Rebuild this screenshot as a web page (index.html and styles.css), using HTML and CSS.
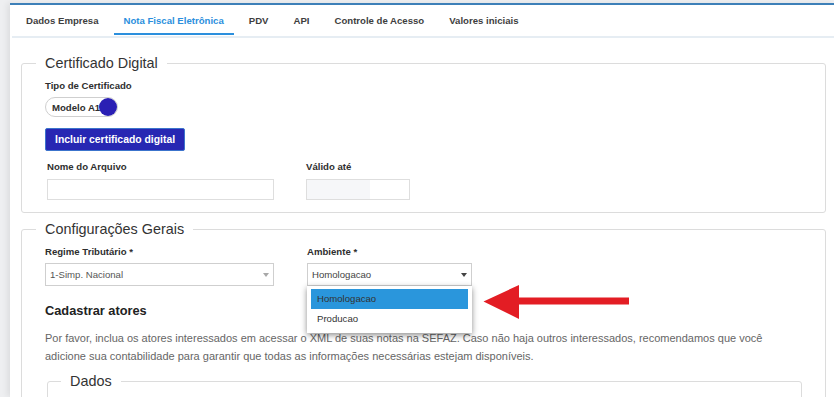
FILE: index.html
```html
<!DOCTYPE html>
<html>
  <head>
    <meta charset="UTF-8" />
    <meta name="viewport" content="width=device-width, initial-scale=1">
    <title>Configurações - Nota Fiscal Eletrônica</title>
    <link rel="stylesheet" href="styles.css">
  </head>
  <body>
    <div class="page">
      <nav class="tabs">
        <a class="tab">Dados Empresa</a>
        <a class="tab active">Nota Fiscal Eletrônica</a>
        <a class="tab">PDV</a>
        <a class="tab">API</a>
        <a class="tab">Controle de Acesso</a>
        <a class="tab">Valores iniciais</a>
      </nav>

      <div class="content">
        <fieldset class="group">
          <legend>Certificado Digital</legend>
          <div class="label first">Tipo de Certificado</div>
          <div class="toggle">
            <span class="toggle-text">Modelo A1</span>
            <span class="toggle-knob"></span>
          </div>
          <button class="primary-button">Incluir certificado digital</button>
          <div class="field-row file-row">
            <div class="field">
              <div class="label">Nome do Arquivo</div>
              <div class="input"></div>
            </div>
            <div class="field">
              <div class="label">Válido até</div>
              <div class="input date"></div>
            </div>
          </div>
        </fieldset>

        <fieldset class="group second">
          <legend>Configurações Gerais</legend>
          <div class="field-row select-row">
            <div class="field">
              <div class="label first">Regime Tributário *</div>
              <div class="select muted">1-Simp. Nacional<span class="caret"></span></div>
            </div>
            <div class="field">
              <div class="label first">Ambiente *</div>
              <div class="select">Homologacao<span class="caret"></span>
                <ul class="dropdown">
                  <li class="option selected">Homologacao</li>
                  <li class="option">Producao</li>
                </ul>
              </div>
            </div>
          </div>

          <h3 class="section-title">Cadastrar atores</h3>
          <p class="hint">Por favor, inclua os atores interessados em acessar o XML de suas notas na SEFAZ. Caso não haja outros interessados, recomendamos que você adicione sua contabilidade para garantir que todas as informações necessárias estejam disponíveis.</p>

          <fieldset class="group inner">
            <legend>Dados</legend>
          </fieldset>
        </fieldset>
      </div>
    </div>

    <svg class="callout-arrow" width="147" height="36" viewBox="0 0 147 36">
      <polygon points="0.5,17.5 36,1 36,13.5 146,13.5 146,20.5 36,20.5 36,35" fill="#e31d24" />
    </svg>
  </body>
</html>
```

FILE: styles.css
```css
* {
  box-sizing: border-box;
}

body {
  margin: 0;
  background: #eeeff1;
  font-family: 'Liberation Sans', Arial, sans-serif;
  color: #333;
  position: relative;
  height: 397px;
  overflow: hidden;
}

.page {
  margin: 3px 0 0 10px;
  background: #fff;
  border-top: 2px solid #3d80b8;
  box-shadow: -3px 0 6px rgba(0, 0, 0, 0.07);
  height: 394px;
  overflow: hidden;
}

.tabs {
  display: flex;
  gap: 5px;
  padding: 0 0 1px 4px;
  margin: 0 0 0 2px;
  border-bottom: 2px solid #e6edf3;
}

.tab {
  padding: 10px 10px 6px;
  font-size: 9.6px;
  line-height: 12px;
  font-weight: bold;
  color: #3e3e3e;
  border-bottom: 2px solid transparent;
  white-space: nowrap;
}

.tab.active {
  color: #2b8fdd;
  border-bottom-color: #2b8fdd;
}

.content {
  padding: 16.5px 8px 0 11px;
}

.group {
  margin: 0;
  padding: 0 23px 12px;
  border: 1px solid #dcdcdc;
  border-radius: 3px;
  min-width: 0;
}

.group legend {
  padding: 0 9px;
  margin-left: -9px;
  font-size: 14.4px;
  line-height: 17px;
  color: #333;
}

.group.second {
  margin-top: 7.5px;
  padding-bottom: 0;
}

.label {
  font-size: 9.6px;
  line-height: 12px;
  font-weight: bold;
  color: #2e2e2e;
}

.label.first {
  margin-top: 8px;
}

.toggle {
  display: inline-flex;
  align-items: center;
  height: 20px;
  margin-top: 5.5px;
  padding-left: 6px;
  border: 1px solid #cfcfcf;
  border-radius: 10px;
  vertical-align: top;
}

.toggle-text {
  font-size: 9.6px;
  font-weight: bold;
  color: #2e2e2e;
}

.toggle-knob {
  width: 18px;
  height: 18px;
  margin-left: -1px;
  border-radius: 50%;
  background: #2a1fb4;
}

.primary-button {
  display: block;
  height: 23px;
  margin-top: 11px;
  padding: 0 9px;
  background: #2727b3;
  border: 1px solid #3c74cc;
  border-radius: 2px;
  color: #fff;
  font-family: inherit;
  font-size: 10.4px;
  font-weight: bold;
}

.field-row {
  display: grid;
}

.file-row {
  grid-template-columns: 227px 104px;
  column-gap: 32px;
  margin: 10px 0 0 2px;
}

.file-row .label {
  margin-bottom: 6px;
}

.input {
  height: 21px;
  border: 1px solid #dedede;
  background: #fff;
}

.input.date {
  background: linear-gradient(to right, #f6f7f9 62%, #fff 62%);
}

.select-row {
  grid-template-columns: 229px 165px;
  column-gap: 33px;
}

.select-row .label {
  margin-bottom: 5.5px;
}

.select {
  position: relative;
  height: 23px;
  padding-left: 4px;
  border: 1px solid #cfcfcf;
  font-size: 9.6px;
  line-height: 21px;
  color: #444;
  background: #fff;
}

.select.muted {
  color: #555;
}

.caret {
  position: absolute;
  right: 4px;
  top: 9px;
  border-left: 3.5px solid transparent;
  border-right: 3.5px solid transparent;
  border-top: 4px solid #444;
}

.select.muted .caret {
  border-top-color: #a8a8a8;
}

.dropdown {
  position: absolute;
  left: -1px;
  top: 22px;
  width: 165px;
  margin: 0;
  padding: 3px 4px 4px;
  list-style: none;
  background: #fff;
  box-shadow: 0 2px 6px rgba(0, 0, 0, 0.45);
  z-index: 2;
}

.option {
  height: 20px;
  padding-left: 6px;
  line-height: 20px;
  font-size: 9.6px;
  color: #333;
}

.option.selected {
  background: #2a96dc;
}

.section-title {
  margin: 17px 0 0;
  font-size: 12.8px;
  line-height: 16px;
  font-weight: bold;
  color: #222;
}

.hint {
  margin: 10px 0 0;
  font-size: 11px;
  line-height: 18px;
  color: #666;
}

.group.inner {
  margin: 7.5px 0 0 2px;
  padding: 0 13px;
  min-height: 60px;
}

.group.inner legend {
  margin-left: 0;
}

.callout-arrow {
  position: absolute;
  left: 483px;
  top: 284px;
}
```
